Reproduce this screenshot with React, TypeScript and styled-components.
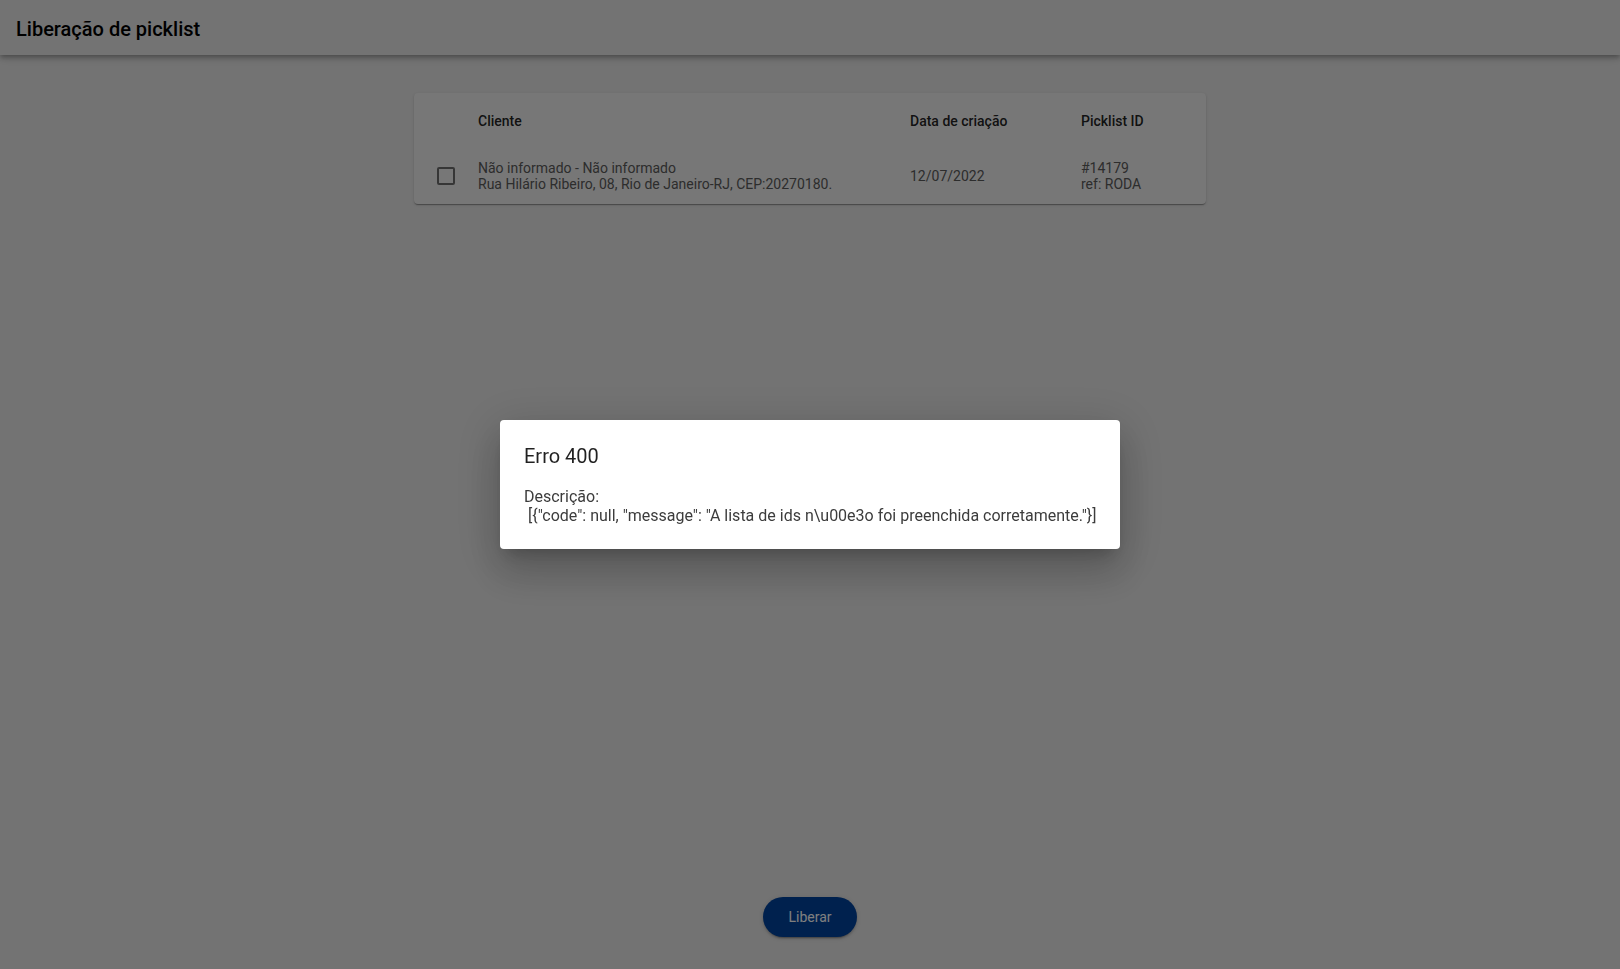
import styled, {createGlobalStyle} from 'styled-components';

const GlobalStyle = createGlobalStyle`
  html, body {
    margin: 0;
    padding: 0;
    background: #e6e6e6;
    font-family: Roboto, "Liberation Sans", Arial, sans-serif;
  }

  #root {
    min-height: 100vh;
  }
`;

const Page = styled.div`
  min-height: 100vh;
  display: flex;
  flex-direction: column;
  background: #e6e6e6;
`;

const Header = styled.header`
  height: 55px;
  box-sizing: border-box;
  padding: 3px 16px 0;
  display: flex;
  align-items: center;
  background: #e6e6e6;
  box-shadow: 0 2px 4px -1px rgba(0, 0, 0, 0.2), 0 4px 5px 0 rgba(0, 0, 0, 0.14), 0 1px 10px 0 rgba(0, 0, 0, 0.12);
  font-size: 20px;
  font-weight: 500;
  color: #000;
  position: relative;
  z-index: 1;
`;

const Main = styled.main`
  flex: 1;
  display: flex;
  justify-content: center;
  align-items: flex-start;
  padding-top: 38px;
`;

const Card = styled.div`
  width: 792px;
  background: #eeeeee;
  border-radius: 4px;
  box-shadow: 0 2px 1px -1px rgba(0, 0, 0, 0.2), 0 1px 1px 0 rgba(0, 0, 0, 0.14), 0 1px 3px 0 rgba(0, 0, 0, 0.12);
`;

const Row = styled.div<{ $head?: boolean }>`
  display: grid;
  grid-template-columns: 64px 432px 171px 1fr;
  align-items: center;
  height: ${p => (p.$head ? '55px' : '56px')};
  font-size: 14px;
  font-weight: ${p => (p.$head ? 500 : 400)};
  color: ${p => (p.$head ? 'rgba(0, 0, 0, 0.87)' : '#5a5a5a')};
`;

const Cell = styled.div`
  line-height: normal;
`;

const CheckCell = styled.div`
  padding-left: 23px;
  display: flex;
  align-items: center;
`;

const Box = styled.span`
  display: block;
  width: 18px;
  height: 18px;
  box-sizing: border-box;
  border: 2px solid rgba(0, 0, 0, 0.54);
  border-radius: 2px;
`;

const Footer = styled.footer`
  display: flex;
  justify-content: center;
  padding-bottom: 32px;
`;

const Button = styled.button`
  width: 94px;
  height: 40px;
  border: none;
  border-radius: 20px;
  background: #00429c;
  color: #fff;
  font-family: Roboto, "Liberation Sans", Arial, sans-serif;
  font-size: 14px;
  font-weight: 400;
  cursor: pointer;
  box-shadow: 0 3px 1px -2px rgba(0, 0, 0, 0.2), 0 2px 2px 0 rgba(0, 0, 0, 0.14), 0 1px 5px 0 rgba(0, 0, 0, 0.12);
`;

const Backdrop = styled.div`
  position: fixed;
  inset: 0;
  z-index: 10;
  background: rgba(0, 0, 0, 0.5);
  display: flex;
  align-items: center;
  justify-content: center;
`;

const Dialog = styled.div`
  width: 620px;
  box-sizing: border-box;
  padding: 24px;
  background: #fff;
  border-radius: 4px;
  box-shadow: 0 11px 15px -7px rgba(0, 0, 0, 0.2), 0 24px 38px 3px rgba(0, 0, 0, 0.14), 0 9px 46px 8px rgba(0, 0, 0, 0.12);
`;

const Title = styled.h2`
  margin: 0 0 19px;
  font-size: 20px;
  font-weight: 400;
  line-height: normal;
  color: rgba(0, 0, 0, 0.87);
`;

const Text = styled.p`
  margin: 0;
  font-size: 16px;
  line-height: normal;
  white-space: nowrap;
  color: #3c3c3c;
`;

function App() {
  return (
    <Page>
      <GlobalStyle/>
      <Header>Liberação de picklist</Header>
      <Main>
        <Card>
          <Row $head>
            <div/>
            <Cell>Cliente</Cell>
            <Cell>Data de criação</Cell>
            <Cell>Picklist ID</Cell>
          </Row>
          <Row>
            <CheckCell><Box/></CheckCell>
            <Cell>
              Não informado - Não informado<br/>
              Rua Hilário Ribeiro, 08, Rio de Janeiro-RJ, CEP:20270180.
            </Cell>
            <Cell>12/07/2022</Cell>
            <Cell>
              #14179<br/>
              ref: RODA
            </Cell>
          </Row>
        </Card>
      </Main>
      <Footer>
        <Button>Liberar</Button>
      </Footer>
      <Backdrop>
        <Dialog>
          <Title>Erro 400</Title>
          <Text>
            Descrição:<br/>
            {'\u00a0[{"code": null, "message": "A lista de ids n\\u00e3o foi preenchida corretamente."}]'}
          </Text>
        </Dialog>
      </Backdrop>
    </Page>
  );
}

export default App;
